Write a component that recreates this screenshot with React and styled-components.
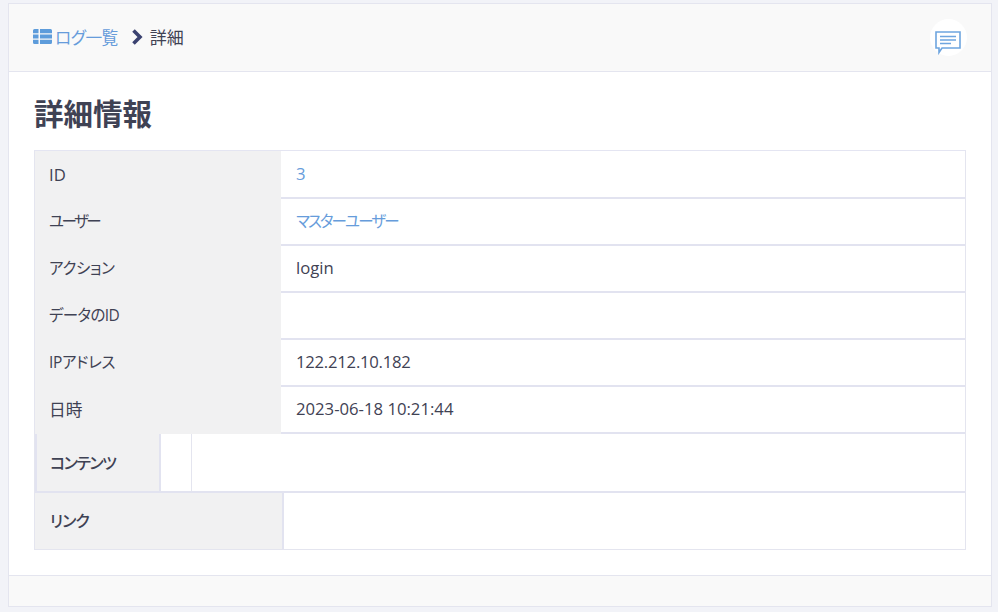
import React from "react";
import styled, { createGlobalStyle } from "styled-components";

const Global = createGlobalStyle`
  html, body { margin: 0; padding: 0; background: #f2f3f8; }
  body { font-family: "Open Sans", "Noto Sans CJK JP", sans-serif; color: #3f4254; font-feature-settings: "palt"; }
  * { box-sizing: border-box; }
`;
const Page = styled.div`
  width: 998px; height: 612px; padding: 3px 6px 5px 8px; overflow: hidden;
`;
const Card = styled.div`
  width: 984px; height: 604px; background: #fff; border: 1px solid #e4e5ef; display: flex; flex-direction: column;
`;
const Header = styled.header`
  height: 68px; flex: none; background: #f9f9f9; border-bottom: 1px solid #e4e5ef;
  display: flex; align-items: center; justify-content: space-between; padding: 0 24px;
`;
const Crumbs = styled.nav`
  display: flex; align-items: center; font-size: 17px; margin-top: -2px;
`;
const CrumbLink = styled.a`
  color: #669cdb; display: flex; align-items: center; gap: 3px; font-size: 16.7px; letter-spacing: -0.5px;
`;
const Sep = styled.span`
  margin: 0 7px 0 13px; display: flex; align-items: center;
`;
const CircleBtn = styled.button`
  width: 37px; height: 37px; border-radius: 50%; border: 0; background: #fff; padding: 0;
  display: flex; align-items: center; justify-content: center;
  svg { margin: 10px 2px 0 0; }
`;
const Body = styled.main`
  flex: 1; padding: 21px 25px 25px 25px; display: flex; flex-direction: column;
`;
const Title = styled.h2`
  margin: 0 0 19px; font-size: 29.5px; line-height: 38px; color: #3f4254;
  font-family: "Noto Sans CJK JP", sans-serif; font-weight: 700;
`;
const Table = styled.div`
  border: 1px solid #e4e5ef; border-top-color: #e4e5f2; display: flex; flex-direction: column; height: 400px;
`;
const Row = styled.div`
  height: 47px; flex: none; display: flex; border-bottom: 2px solid #e2e3f0; align-items: stretch;
  font-size: 16.7px;
  &:first-child { height: 48px; }
  &:first-child > div:first-child { padding-bottom: 2px; }
`;
const Head = styled.div`
  width: 246px; flex: none; background: #f1f1f2; padding: 0 0 4px 14px; display: flex; align-items: center; margin-bottom: -2px;
  color: #3f4254; font-size: ${p => p.$fs || 16.7}px; letter-spacing: ${p => p.$ls || 0}px;
`;
const Cell = styled.div`
  flex: 1; padding: 0 0 2px 15px; display: flex; align-items: center; color: ${p => (p.$link ? "#669cdb" : "#3f4254")};
  font-size: ${p => p.$fs || 16.7}px; letter-spacing: ${p => p.$ls || 0}px;
`;
const TallRow = styled.div`
  height: ${p => p.$h}px; flex: none; display: flex; font-size: 16px;
  border-bottom: ${p => (p.$last ? "0" : "2px solid #e2e3f0")};
  font-family: "Noto Sans CJK JP", sans-serif; font-weight: 500;
`;
const BoldHead = styled.div`
  width: ${p => p.$w}px; flex: none; background: #f1f1f2; display: flex; align-items: center;
  padding: 0 0 ${p => p.$pb}px ${p => p.$pl}px; border-right: 2px solid #e2e3f0; border-left: ${p => (p.$inset ? "2px solid #e2e3f0" : "0")};
  letter-spacing: ${p => p.$ls}px;
`;
const Blank = styled.div`
  width: ${p => p.$w}px; flex: none; border-right: 1px solid #e4e5ef;
`;
const Fill = styled.div` flex: 1; `;
const Footer = styled.footer`
  height: 31px; flex: none; background: #f9f9f9; border-top: 1px solid #e4e5ef;
`;

const rows = [
  { h: "ID", v: "3", link: true },
  { h: "ユーザー", hf: 15.5, hs: -2.5, v: "マスターユーザー", vf: 15.5, vs: -1.9, link: true },
  { h: "アクション", hf: 15.5, hs: -0.3, v: "login" },
  { h: "データのID", hf: 15.5, hs: -0.6, v: "" },
  { h: "IPアドレス", hf: 15.5, hs: -0.3, v: "122.212.10.182", vs: -0.25 },
  { h: "日時", v: "2023-06-18 10:21:44" },
];

export default function App() {
  return (
    <>
      <Global />
      <Page>
        <Card>
          <Header>
            <Crumbs>
              <CrumbLink>
                <svg width="19" height="15" viewBox="0 0 19 15">
                  <path fill="#5d9cdb" d="M0 1.500A1.500 1.500 0 0 1 1.500 0H5.500v4.300H0zM7 0h10.500A1.500 1.500 0 0 1 19 1.500v2.800H7zM0 5.400h5.500v4.200H0zM7 5.400h12v4.200H7zM0 10.700h5.500V15H1.500A1.500 1.500 0 0 1 0 13.500zM7 10.700h12v2.800a1.500 1.500 0 0 1-1.500 1.500H7z" />
                </svg>
                ログ一覧
              </CrumbLink>
              <Sep>
                <svg width="12" height="16" viewBox="0 0 12 16">
                  <path d="M2.500 1.500l6.500 6.500-6.500 6.500" fill="none" stroke="#3b4270" strokeWidth="3.600" />
                </svg>
              </Sep>
              <span>詳細</span>
            </Crumbs>
            <CircleBtn aria-label="comment">
              <svg width="26" height="24" viewBox="0 0 26 24">
                <path d="M1 1h24v16H7l-3 4.500V17H1z" fill="none" stroke="#6ea5df" strokeWidth="1.600" />
                <path d="M5 5.500h16M5 9h16M5 12.500h11" stroke="#6ea5df" strokeWidth="1.400" />
              </svg>
            </CircleBtn>
          </Header>
          <Body>
            <Title>詳細情報</Title>
            <Table>
              {rows.map(r => (
                <Row key={r.h}>
                  <Head $fs={r.hf} $ls={r.hs}>{r.h}</Head>
                  <Cell $link={r.link} $fs={r.vf} $ls={r.vs}>{r.v}</Cell>
                </Row>
              ))}
              <TallRow $h={59}>
                <BoldHead $w={126} $pl={13} $pb={2} $ls={-1.5} $inset>コンテンツ</BoldHead>
                <Blank $w={31} />
                <Fill />
              </TallRow>
              <TallRow $h={56} $last>
                <BoldHead $w={249} $pl={15} $pb={3} $ls={-0.9}>リンク</BoldHead>
                <Fill />
              </TallRow>
            </Table>
          </Body>
          <Footer />
        </Card>
      </Page>
    </>
  );
}
